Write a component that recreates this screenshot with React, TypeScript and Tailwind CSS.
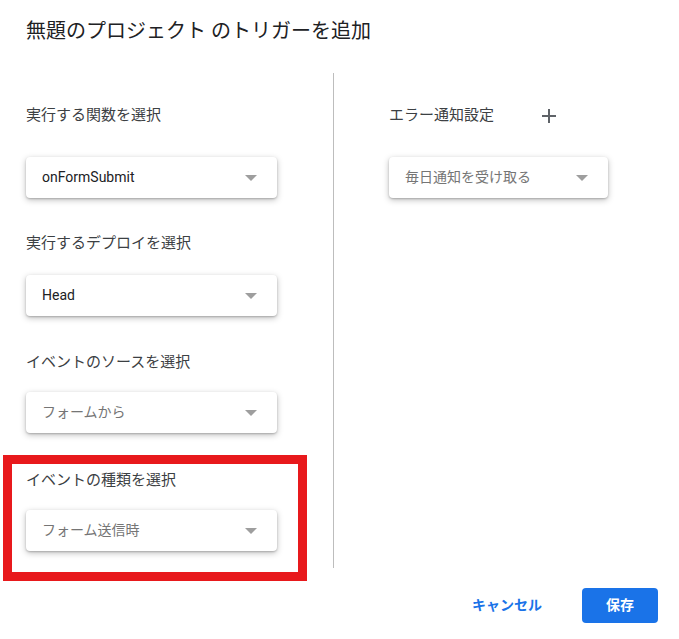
import type { ReactNode } from 'react';

const font = { fontFamily: 'Roboto, "Noto Sans CJK JP", sans-serif' };

function Caret() {
  return (
    <svg width="12" height="6" viewBox="0 0 12 6" className="shrink-0">
      <path d="M0 0h12L6 6z" fill="#9e9e9e" />
    </svg>
  );
}

function Select({ value, muted, width = 'w-[251px]' }: { value: string; muted?: boolean; width?: string }) {
  return (
    <div
      className={`${width} h-[41px] flex items-center justify-between pl-4 pr-5 bg-white rounded shadow-[0_1px_2px_rgba(0,0,0,0.2),0_2px_6px_rgba(0,0,0,0.25)] text-[14px] ${
        muted ? 'text-[#757575]' : 'text-[#202124]'
      }`}
    >
      <span>{value}</span>
      <Caret />
    </div>
  );
}

function Label({ children }: { children: ReactNode }) {
  return <div className="h-6 leading-6 text-[15px] text-[#3c4043]">{children}</div>;
}

export default function App() {
  return (
    <div style={font} className="w-[679px] h-[639px] bg-white overflow-hidden pl-[26px] pt-[17px]">
      <h1 className="text-[20px] leading-7 text-[#202124]">無題のプロジェクト のトリガーを追加</h1>

      <div className="flex mt-[28px] h-[495px]">
        {/* left: function, deployment, source, event type */}
        <div className="w-[307px] pt-[30px]">
          <Label>実行する関数を選択</Label>
          <div className="mt-[30px]">
            <Select value="onFormSubmit" />
          </div>

          <div className="mt-[33px]">
            <Label>実行するデプロイを選択</Label>
            <div className="mt-[20px]">
              <Select value="Head" />
            </div>
          </div>

          <div className="mt-[34px]">
            <Label>イベントのソースを選択</Label>
            <div className="mt-[18px]">
              <Select value="フォームから" muted />
            </div>
          </div>

          <div className="relative mt-[35px]">
            <Label>イベントの種類を選択</Label>
            <div className="mt-[18px]">
              <Select value="フォーム送信時" muted />
            </div>
            {/* highlight frame */}
            <div className="absolute left-[-23px] top-[-13px] w-[304px] h-[126px] border-[9px] border-[#e8191c] pointer-events-none" />
          </div>
        </div>

        <div className="w-px bg-[#bdbdbd]" />

        {/* right: error notification */}
        <div className="pl-[55px] pt-[30px]">
          <div className="flex items-center">
            <Label>エラー通知設定</Label>
            <svg width="14" height="14" viewBox="0 0 14 14" className="ml-[48px] mt-[2px]">
              <path d="M7 0v14M0 7h14" stroke="#5f6368" strokeWidth="2" />
            </svg>
          </div>
          <div className="mt-[30px]">
            <Select value="毎日通知を受け取る" muted width="w-[219px]" />
          </div>
        </div>
      </div>

      <div className="flex justify-end items-center gap-[40px] pr-[21px] mt-[20px]">
        <button className="text-[14px] font-bold text-[#1a73e8]">キャンセル</button>
        <button className="w-[76px] h-[35px] rounded bg-[#1a73e8] text-white text-[14px] font-bold">保存</button>
      </div>
    </div>
  );
}
